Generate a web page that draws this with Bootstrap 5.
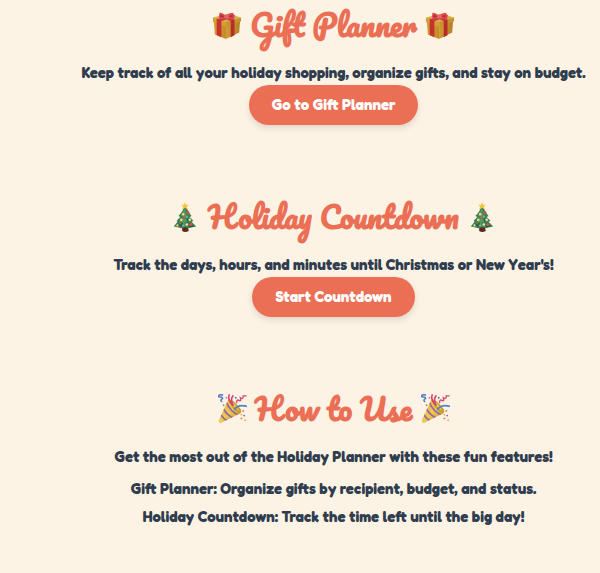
<!DOCTYPE html>
<html lang="en">
<head>
<meta charset="utf-8">
<meta name="viewport" content="width=device-width, initial-scale=1">
<title>Holiday Planner</title>
<link href="https://cdn.jsdelivr.net/npm/bootstrap@5.3.0/dist/css/bootstrap.min.css" rel="stylesheet">
<style>
  body { background: #fdf3e5; color: #2f3d4e; font-family: "Fredoka One", Fredoka, Lato, sans-serif; font-size: 15px; font-weight: 700; line-height: 24px; }
  .planner { padding-left: 67px; }
  .feature { padding-bottom: 67px; }
  .feature-title { color: #eb6f55; font-family: Pacifico, Lato, sans-serif; font-weight: 700; font-size: 30px; line-height: 50px; padding-bottom: 11px; margin: 0; gap: 8px; }
  .emoji { width: 30px; height: 30px; flex: none; }
  .btn-festive { --bs-btn-color: #fff; --bs-btn-bg: #eb6f55; --bs-btn-hover-color: #fff; --bs-btn-hover-bg: #d95f46; --bs-btn-active-color: #fff; --bs-btn-active-bg: #c9553d; --bs-btn-font-size: 15px; --bs-btn-font-weight: 700; --bs-btn-padding-x: 23px; --bs-btn-padding-y: 8px; --bs-btn-border-width: 0; --bs-btn-line-height: 24px; box-shadow: 0 3px 6px rgba(0,0,0,.12); }
  .tips li { margin-bottom: 4px; }
</style>
</head>
<body>
<svg class="position-absolute" width="0" height="0" aria-hidden="true">
  <defs>
    <linearGradient id="goldL" x1="0" x2="1"><stop offset="0" stop-color="#d39b2f"/><stop offset="1" stop-color="#c48b28"/></linearGradient>
    <linearGradient id="goldR" x1="0" x2="1"><stop offset="0" stop-color="#cf9c33"/><stop offset="1" stop-color="#b57e27"/></linearGradient>
    <linearGradient id="cone" x1="0" y1="0" x2="1" y2="1"><stop offset="0" stop-color="#dcae30"/><stop offset=".5" stop-color="#eecb52"/><stop offset="1" stop-color="#b98c1f"/></linearGradient>
    <clipPath id="coneClip"><path d="M12 6Q15 5 25 16Q27 19 24 21L4 31Q2 31 2 28Z"/></clipPath>
  </defs>
  <symbol id="gift" viewBox="0 0 32 32">
    <path d="M2 12L15 17V31L3 26Z" fill="url(#goldL)"/>
    <path d="M15 17L30 11L29 24L15 31Z" fill="url(#goldR)"/>
    <path d="M1 8L17 4L31 8L15 14Z" fill="#d8ae47"/>
    <path d="M1 8L15 13V18L1 13Z" fill="#d4a037"/>
    <path d="M15 13L31 8V12L15 18Z" fill="#c59430"/>
    <path d="M5 9L10 11V29L5 27Z" fill="#c8322e"/>
    <path d="M20 11L24 10V27L20 29Z" fill="#b92b2b"/>
    <path d="M5 10L21 4L25 6L10 12ZM8 6L12 5L24 10L20 12Z" fill="#cf3637"/>
    <path d="M15 6Q10 2 8 3Q7 6 8 10Q12 10 15 8Q20 11 24 9Q24 4 22 3Q18 3 15 6Z" fill="#d64b50"/>
    <path d="M9 5L14 7L9 8ZM17 7L22 5L22 8Z" fill="#b92b37"/>
    <rect x="13" y="5" width="5" height="4" rx="1" fill="#e1666b"/>
  </symbol>
  <symbol id="tree" viewBox="0 0 32 32">
    <path d="M13 26H19L20 31Q16 33 13 31Z" fill="#5c2b20"/>
    <path d="M16 3L20 11L23 15L21 16L25 20L23 21L28 26L24 27L20 28L16 27L12 28L8 27L4 26L8 21L7 20L11 16L9 15L13 10Z" fill="#3c8055"/>
    <path d="M16 5L17 13L20 15L16 17L20 21L15 22L20 26L10 26L14 22L10 21L15 16L12 15Z" fill="#5da16b" opacity=".65"/>
    <path d="M18 17L23 20L18 21ZM8 24L14 22L12 27ZM20 22L26 26L20 27Z" fill="#245f42"/>
    <path d="M16 0L17 3L20 3L18 5L19 8L16 6L13 8L14 5L12 3L15 3Z" fill="#f2c63f"/>
    <g fill="#f4dc72"><circle cx="14" cy="13" r="1.4"/><circle cx="12" cy="19" r="1.4"/><circle cx="21" cy="19" r="1.5"/><circle cx="18" cy="24" r="1.4"/><circle cx="8" cy="25" r="1.2"/></g>
    <g fill="#d5524d"><circle cx="19" cy="11" r="1.6"/><circle cx="15" cy="17" r="1.2"/><circle cx="22" cy="24" r="1.6"/><circle cx="11" cy="23" r="1"/></g>
    <g fill="#70b8cf"><circle cx="18" cy="16" r="1"/><circle cx="14" cy="25" r="1"/></g>
  </symbol>
  <symbol id="party" viewBox="0 0 32 32">
    <path d="M12 6Q15 5 25 16Q27 19 24 21L4 31Q2 31 2 28Z" fill="url(#cone)"/>
    <g clip-path="url(#coneClip)" fill="none" stroke="#9a66a5" stroke-width="1.8"><path d="M10 9Q14 19 24 23M7 16Q11 23 18 26M4 22Q7 27 12 29"/></g>
    <path d="M12 6Q17 5 25 16Q27 19 24 21Q17 18 12 6Z" fill="#c99c2d"/>
    <path d="M14 8Q18 8 24 18Q18 15 14 8Z" fill="#edc957"/>
    <g fill="none" stroke-linecap="round">
      <path d="M6 1Q1 0 2 3Q6 3 6 5Q3 6 5 8" stroke="#4672c4" stroke-width="1.5"/>
      <path d="M17 12Q11 6 13 1M17 12Q14 5 17 2" stroke="#d93f6c" stroke-width="1.7"/>
      <path d="M21 9Q21 5 24 7Q26 8 25 4Q28 6 28 2L31 2" stroke="#d84868" stroke-width="1.5"/>
      <path d="M19 16Q23 11 31 13" stroke="#4d85cc" stroke-width="2"/>
    </g>
    <g fill="#d97b51"><circle cx="28" cy="18" r="1"/><circle cx="26" cy="26" r="1"/><circle cx="7" cy="12" r="1"/></g>
    <g fill="#9066b0"><circle cx="10" cy="4" r=".9"/><circle cx="29" cy="23" r="1"/></g>
    <g fill="#e3b53e"><circle cx="26" cy="22" r="1"/><circle cx="30" cy="28" r="1"/></g>
    <circle cx="20" cy="4" r="1" fill="#4672c4"/>
  </symbol>
</svg>
<main class="planner text-center">
  <section class="feature">
    <h2 class="feature-title d-flex justify-content-center align-items-center">
      <svg class="emoji" aria-hidden="true"><use href="#gift"/></svg>Gift Planner<svg class="emoji" aria-hidden="true"><use href="#gift"/></svg>
    </h2>
    <p class="mb-0">Keep track of all your holiday shopping, organize gifts, and stay on budget.</p>
    <button type="button" class="btn btn-festive rounded-pill">Go to Gift Planner</button>
  </section>
  <section class="feature">
    <h2 class="feature-title d-flex justify-content-center align-items-center">
      <svg class="emoji" aria-hidden="true"><use href="#tree"/></svg>Holiday Countdown<svg class="emoji" aria-hidden="true"><use href="#tree"/></svg>
    </h2>
    <p class="mb-0">Track the days, hours, and minutes until Christmas or New Year's!</p>
    <button type="button" class="btn btn-festive rounded-pill">Start Countdown</button>
  </section>
  <section>
    <h2 class="feature-title d-flex justify-content-center align-items-center">
      <svg class="emoji" aria-hidden="true"><use href="#party"/></svg>How to Use<svg class="emoji" aria-hidden="true"><use href="#party"/></svg>
    </h2>
    <p class="mb-2">Get the most out of the Holiday Planner with these fun features!</p>
    <ul class="tips list-unstyled mb-0">
      <li>Gift Planner: Organize gifts by recipient, budget, and status.</li>
      <li>Holiday Countdown: Track the time left until the big day!</li>
    </ul>
  </section>
</main>
<script src="https://cdn.jsdelivr.net/npm/bootstrap@5.3.0/dist/js/bootstrap.bundle.min.js"></script>
</body>
</html>
